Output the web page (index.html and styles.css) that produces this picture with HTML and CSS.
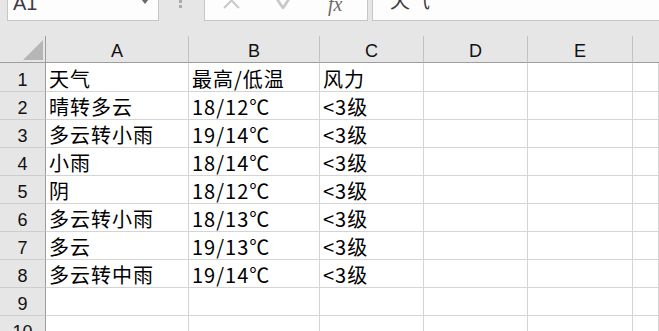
FILE: index.html
```html
<!DOCTYPE html>
<html lang="zh-CN">
<head>
<meta charset="utf-8">
<title>Sheet</title>
<link rel="stylesheet" href="styles.css">
</head>
<body>
<div class="app">
  <div class="fbar">
    <div class="fbar-row">
      <div class="namebox">
        <span class="namebox-text">A1</span>
        <svg class="nb-arrow" width="8" height="5" viewBox="0 0 8 5"><polygon points="0,0 8,0 4,5" fill="#6a6a6a"/></svg>
      </div>
      <div class="dots"></div>
      <div class="btns">
        <svg class="btn-x" width="17" height="17" viewBox="0 0 17 17"><path d="M1 1 L16 16 M16 1 L1 16" stroke="#c8c8c8" stroke-width="2" fill="none"/></svg>
        <svg class="btn-ok" width="20" height="20" viewBox="0 0 20 20"><path d="M1 10 L7 19 L19 1" stroke="#c6c6c6" stroke-width="2.6" fill="none"/></svg>
        <span class="btn-fx">fx</span>
      </div>
      <div class="finput"><span class="finput-text">天气</span></div>
    </div>
  </div>
  <div class="spacer"></div>
  <div class="sheet">
    <div class="corner"><svg width="20" height="20" viewBox="0 0 20 20"><polygon points="20,0 20,20 0,20" fill="#b6b6b6"/></svg></div>
    <div class="ch">A</div><div class="ch">B</div><div class="ch">C</div><div class="ch">D</div><div class="ch">E</div><div class="ch ch-last"></div>

    <div class="rh">1</div><div class="c">天气</div><div class="c">最高/低温</div><div class="c">风力</div><div class="c"></div><div class="c"></div><div class="c"></div>
    <div class="rh">2</div><div class="c">晴转多云</div><div class="c">18/12℃</div><div class="c">&lt;3级</div><div class="c"></div><div class="c"></div><div class="c"></div>
    <div class="rh">3</div><div class="c">多云转小雨</div><div class="c">19/14℃</div><div class="c">&lt;3级</div><div class="c"></div><div class="c"></div><div class="c"></div>
    <div class="rh">4</div><div class="c">小雨</div><div class="c">18/14℃</div><div class="c">&lt;3级</div><div class="c"></div><div class="c"></div><div class="c"></div>
    <div class="rh">5</div><div class="c">阴</div><div class="c">18/12℃</div><div class="c">&lt;3级</div><div class="c"></div><div class="c"></div><div class="c"></div>
    <div class="rh">6</div><div class="c">多云转小雨</div><div class="c">18/13℃</div><div class="c">&lt;3级</div><div class="c"></div><div class="c"></div><div class="c"></div>
    <div class="rh">7</div><div class="c">多云</div><div class="c">19/13℃</div><div class="c">&lt;3级</div><div class="c"></div><div class="c"></div><div class="c"></div>
    <div class="rh">8</div><div class="c">多云转中雨</div><div class="c">19/14℃</div><div class="c">&lt;3级</div><div class="c"></div><div class="c"></div><div class="c"></div>
    <div class="rh">9</div><div class="c"></div><div class="c"></div><div class="c"></div><div class="c"></div><div class="c"></div><div class="c"></div>
    <div class="rh">10</div><div class="c"></div><div class="c"></div><div class="c"></div><div class="c"></div><div class="c"></div><div class="c"></div>
  </div>
</div>
</body>
</html>
```
FILE: styles.css
```css
* { box-sizing: border-box; }
html, body { margin: 0; padding: 0; }
body {
  width: 659px;
  height: 331px;
  overflow: hidden;
  background: #ffffff;
  font-family: "Liberation Sans", "Noto Sans CJK SC", sans-serif;
}
.app { width: 659px; }

/* formula bar */
.fbar {
  height: 21px;
  overflow: hidden;
  background: #e6e6e6;
}
.fbar-row {
  display: flex;
  height: 33px;
  margin-top: -12px;
}
.namebox {
  position: relative;
  margin-left: 7px;
  width: 152px;
  background: #fdfdfd;
  border: 1px solid #c6c6c6;
  display: flex;
  align-items: flex-end;
  padding: 0 0 7px 5px;
}
.namebox-text {
  font: 20px/20px "Liberation Sans", sans-serif;
  color: #3a3a44;
}
.nb-arrow {
  position: absolute;
  right: 9px;
  top: 10px;
}
.dots {
  align-self: flex-start;
  margin-left: 20px;
  margin-top: 17px;
  width: 3px;
  height: 3px;
  background: #ababab;
  box-shadow: 0 -5px 0 #ababab;
}
.btns {
  margin-left: 22px;
  width: 164px;
  background: #fdfdfd;
  border: 1px solid #c6c6c6;
  display: flex;
  align-items: flex-start;
}
.btn-x { margin-left: 18px; margin-top: 3px; flex: none; }
.btn-ok { margin-left: 36px; margin-top: 0; flex: none; }
.btn-fx {
  align-self: flex-end;
  margin-left: 32px;
  margin-bottom: 6px;
  font: italic 20px/20px "Liberation Serif", serif;
  color: #6b6b6b;
}
.finput {
  flex: 1;
  margin-left: 4px;
  background: #fdfdfd;
  border: 1px solid #c6c6c6;
  border-right: none;
  display: flex;
  align-items: flex-end;
  padding: 0 0 10px 17px;
}
.finput-text {
  font: 20px/20px "Noto Sans CJK SC", sans-serif;
  color: #3c3c3c;
}
.spacer {
  height: 15px;
  background: #e6e6e6;
}

/* sheet grid */
.sheet {
  display: grid;
  grid-template-columns: 46px 143px 131px 104px 104px 105px 1fr;
  grid-template-rows: 27px 29px repeat(9, 28px);
}
.corner {
  background: #e6e6e6;
  border-right: 1px solid #9d9d9d;
  border-bottom: 1px solid #9d9d9d;
  display: flex;
  justify-content: flex-end;
  align-items: flex-end;
  padding: 0 2px 2px 0;
}
.ch {
  background: #e6e6e6;
  border-right: 1px solid #c2c2c2;
  border-bottom: 1px solid #9d9d9d;
  display: flex;
  justify-content: center;
  align-items: flex-end;
  padding-bottom: 2px;
  font: 18px/18px "Liberation Sans", sans-serif;
  color: #111;
}
.ch-last { border-right: none; }
.rh {
  background: #e6e6e6;
  border-right: 1px solid #9d9d9d;
  border-bottom: 1px solid #cdcdcd;
  display: flex;
  justify-content: center;
  align-items: flex-end;
  padding-bottom: 2px;
  font: 18px/18px "Liberation Sans", sans-serif;
  color: #111;
}
.c {
  border-right: 1px solid #d4d4d4;
  border-bottom: 1px solid #d4d4d4;
  display: flex;
  align-items: flex-end;
  padding: 0 0 2px 3px;
  font: 20px/20px "Noto Sans CJK SC", sans-serif;
  letter-spacing: 1px;
  color: #000;
  white-space: nowrap;
  overflow: hidden;
}
```
